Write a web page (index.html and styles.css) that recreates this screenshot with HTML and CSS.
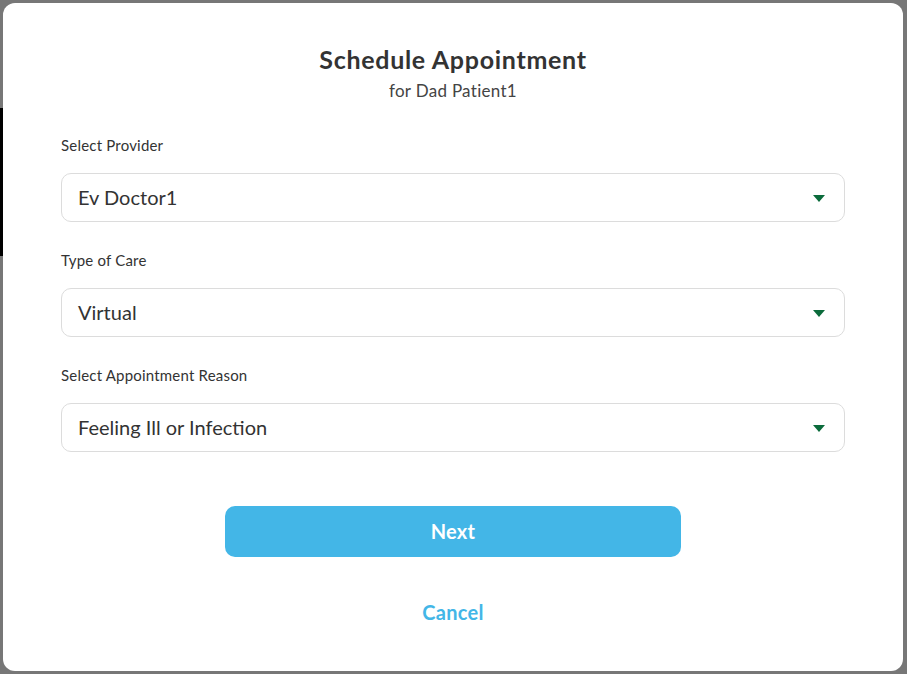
FILE: index.html
```html
<!DOCTYPE html>
<html lang="en">
<head>
<meta charset="utf-8">
<title>Schedule Appointment</title>
<link rel="stylesheet" href="styles.css">
</head>
<body>
<div class="backdrop">
  <div class="page-peek page-peek-dark"></div>
  <div class="modal">
    <header class="modal-head">
      <h1 class="title">Schedule Appointment</h1>
      <p class="subtitle">for Dad Patient1</p>
    </header>
    <form class="form">
      <div class="field">
        <label class="label">Select Provider</label>
        <div class="select">
          <span class="select-value">Ev Doctor1</span>
          <svg class="caret" width="12" height="7" viewBox="0 0 12 7"><path d="M0 0H12L6 7Z" fill="#0b6b3b"/></svg>
        </div>
      </div>
      <div class="field">
        <label class="label">Type of Care</label>
        <div class="select">
          <span class="select-value">Virtual</span>
          <svg class="caret" width="12" height="7" viewBox="0 0 12 7"><path d="M0 0H12L6 7Z" fill="#0b6b3b"/></svg>
        </div>
      </div>
      <div class="field">
        <label class="label">Select Appointment Reason</label>
        <div class="select">
          <span class="select-value">Feeling Ill or Infection</span>
          <svg class="caret" width="12" height="7" viewBox="0 0 12 7"><path d="M0 0H12L6 7Z" fill="#0b6b3b"/></svg>
        </div>
      </div>
      <div class="actions">
        <button type="button" class="btn-next">Next</button>
        <button type="button" class="btn-cancel">Cancel</button>
      </div>
    </form>
  </div>
</div>
</body>
</html>
```

FILE: styles.css
```css
* { box-sizing: border-box; }
html, body { margin: 0; padding: 0; }
body {
  width: 907px;
  height: 674px;
  overflow: hidden;
  background: #777777;
  font-family: "Lato", "Noto Sans", sans-serif;
  color: #333333;
}
.backdrop {
  position: relative;
  width: 907px;
  height: 674px;
  padding: 3px 4px 3px 3px;
}
.page-peek-dark {
  position: absolute;
  left: 0;
  top: 108px;
  width: 3px;
  height: 148px;
  background: #000;
}
.modal {
  position: relative;
  width: 900px;
  height: 668px;
  background: #ffffff;
  border-radius: 12px;
  padding: 41px 58px 0 58px;
}
.modal-head { text-align: center; }
.title {
  margin: 0;
  font-size: 25px;
  line-height: 30px;
  font-weight: 700;
  letter-spacing: 0.7px;
  color: #333333;
}
.subtitle {
  margin: 7px 0 0 0;
  font-size: 17px;
  line-height: 20px;
  letter-spacing: 0.3px;
  color: #444444;
}
.form {
  margin-top: 35px;
  display: flex;
  flex-direction: column;
  gap: 29px;
}
.field {
  display: flex;
  flex-direction: column;
  gap: 19px;
}
.label {
  font-size: 15px;
  line-height: 18px;
  letter-spacing: 0.2px;
  color: #333333;
}
.select {
  height: 49px;
  border: 1px solid #dcdcdc;
  border-radius: 10px;
  display: flex;
  align-items: center;
  justify-content: space-between;
  padding: 0 19px 2px 16px;
}
.select-value {
  font-size: 20px;
  color: #333333;
}
.caret { display: block; margin-top: 3px; }
.actions {
  margin-top: 25px;
  display: flex;
  flex-direction: column;
  align-items: center;
}
.btn-next {
  width: 456px;
  height: 51px;
  border: none;
  border-radius: 10px;
  background: #43b6e7;
  color: #ffffff;
  font-family: inherit;
  font-size: 20px;
  font-weight: 700;
  letter-spacing: 0.3px;
  padding-bottom: 2px;
  cursor: pointer;
}
.btn-cancel {
  margin-top: 43px;
  border: none;
  background: none;
  padding: 0;
  height: 24px;
  line-height: 24px;
  color: #43b6e7;
  font-family: inherit;
  font-size: 20px;
  font-weight: 700;
  letter-spacing: 0.3px;
  cursor: pointer;
}
```
